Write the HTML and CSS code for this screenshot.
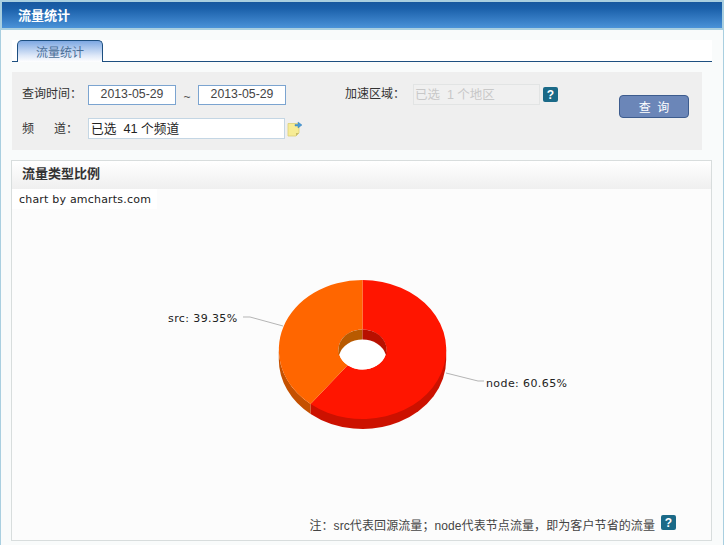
FILE: index.html
```html
<!DOCTYPE html>
<html lang="zh-CN">
<head>
<meta charset="utf-8">
<title>流量统计</title>
<link rel="stylesheet" href="styles.css">
</head>
<body>
<div class="frame">
  <header class="title-bar">流量统计</header>
  <div class="content">
    <div class="tabs"><div class="tab">流量统计</div></div>
    <form class="query">
      <div class="query-fields">
        <div class="row row-first">
          <span class="label">查询时间：</span>
          <span class="date">2013-05-29</span>
          <span class="tilde">~</span>
          <span class="date">2013-05-29</span>
          <span class="label label-region">加速区域：</span>
          <span class="region">已选&nbsp; 1 个地区</span>
          <svg class="help help-region" width="15" height="15" viewBox="0 0 15 15"><rect width="15" height="15" rx="2" fill="#1b6a88"/><text x="7.5" y="12" text-anchor="middle" class="help-mark">?</text></svg>
        </div>
        <div class="row row-second">
          <span class="label label-spaced"><span>频</span><span>道：</span></span>
          <span class="channel">已选&nbsp; 41 个频道</span>
          <svg class="note" width="16" height="16" viewBox="0 0 16 16">
            <path d="M1 2.5H12V12L9 15H1Z" fill="#f7ec95" stroke="#dccf78" stroke-width="0.8"/>
            <path d="M9 15V12H12Z" fill="#c9bd6a"/>
            <path d="M8 3.5H11V1L15 4L11 7V5H8Z" fill="#4a9bd8" stroke="#2f78b0" stroke-width="0.4"/>
          </svg>
        </div>
      </div>
      <button class="search" type="button">查 询</button>
    </form>
    <section class="panel">
      <h2 class="panel-head">流量类型比例</h2>
      <div class="chart">
        <div class="credit-row"><span class="credit">chart by amcharts.com</span></div>
        <svg class="pie" width="699" height="300" viewBox="12 209 699 300">
          <path d="M243 317H250L283 326" class="leader"/>
          <path d="M446 373L478 381H484" class="leader"/>
          <path d="M278.8 349.5V359.5A83.7 69.5 0 0 0 310.6 414V404A83.7 69.5 0 0 1 278.8 349.5Z" fill="#c45000"/>
          <path d="M310.6 404V414A83.7 69.5 0 0 0 446.2 359.5V349.5Z" fill="#cc1100"/>
          <path d="M362.5 280A83.7 69.5 0 1 1 310.6 404L347.6 365.2A24 20 0 1 0 362.5 329.5Z" fill="#ff1500"/>
          <path d="M362.5 280A83.7 69.5 0 0 0 310.6 404L347.6 365.2A24 20 0 0 1 362.5 329.5Z" fill="#ff6600"/>
          <path d="M338.5 349.5A24 20 0 0 1 362.5 329.5V355H338.5Z" fill="#b85a00"/>
          <path d="M386.5 349.5A24 20 0 0 0 362.5 329.5V355H386.5Z" fill="#b81000"/>
          <path d="M339.26 354.5A24 20 0 0 1 385.74 354.5A24 20 0 0 1 339.26 354.5Z" fill="#fff"/>
          <text x="168" y="322" class="pie-label">src: 39.35%</text>
          <text x="486" y="387" class="pie-label">node: 60.65%</text>
        </svg>
        <p class="note-line">
          <span>注：src代表回源流量；node代表节点流量，即为客户节省的流量</span>
          <svg class="help help-note" width="15" height="15" viewBox="0 0 15 15"><rect width="15" height="15" rx="2" fill="#1b6a88"/><text x="7.5" y="12" text-anchor="middle" class="help-mark">?</text></svg>
        </p>
      </div>
    </section>
  </div>
</div>
</body>
</html>
```
FILE: styles.css
```css
* { box-sizing: border-box; }
html, body { margin: 0; padding: 0; background: #fff; height: 100%; overflow: hidden; }
body { font: 12px "Liberation Sans", "Noto Sans CJK SC", sans-serif; color: #333; }
.frame {
  width: 724px; height: 545px; background: #f9fbfb;
  border-left: 1px solid #a9cfe0; border-right: 1px solid #a9cfe0;
}
.title-bar {
  height: 30px; margin-left: -1px; margin-right: -1px; padding: 0 0 1px 16px;
  display: flex; align-items: center; color: #fff; font-weight: 700; font-size: 13px;
  background: linear-gradient(#17589f 0, #1b60aa 25%, #4a92d8 100%);
  border: 2px solid #a9cfe0;
}
.content { padding: 10px 11px 0 10px; }
.tabs {
  width: 700px; height: 22px; margin-left: 1px; padding-left: 5px;
  background: #fff; border-bottom: 1px solid #1d4f80;
}
.tab {
  width: 86px; height: 22px; padding-top: 2px; text-align: center; color: #4a6f98;
  background: linear-gradient(#7ea8e2, #dfe9f8 70%, #fff);
  border: 1px solid #1d4f80; border-bottom: 0; border-radius: 5px 5px 0 0;
}
.query {
  display: flex; width: 690px; height: 78px; margin: 10px 0 0 1px; background: #efefef;
}
.query-fields { width: 607px; padding-top: 12px; }
.row { display: flex; align-items: center; }
.row-first { height: 21px; }
.row-second { height: 21px; margin-top: 13px; }
.label { width: 76px; padding-left: 10px; padding-bottom: 5px; flex: none; color: #333; white-space: nowrap; }
.label-spaced { display: flex; justify-content: space-between; padding-right: 10px; padding-bottom: 3px; }
.label-region { width: 68px; padding-left: 0; margin-left: 59px; }
.date {
  width: 88px; height: 20px; line-height: 16px; text-align: center; background: #fff;
  border: 1px solid #7ba4d0; color: #444; flex: none; font-size: 12.3px;
}
.tilde { width: 22px; text-align: center; padding-top: 5px; color: #555; flex: none; }
.region {
  width: 127px; height: 21px; line-height: 21px; padding-left: 1px; flex: none;
  border: 1px solid #e2e4e4; background: #f0f0f0; color: #c8c8c8; font-size: 12.5px;
}
.help { display: block; flex: none; }
.help-mark { font: 700 12px "Liberation Sans", sans-serif; fill: #fff; }
.help-region { margin-left: 3px; margin-top: -1px; }
.channel {
  width: 197px; height: 21px; line-height: 21px; padding-left: 2px; flex: none;
  border: 1px solid #c4d6e4; background: #fff; color: #222; font-size: 12.7px;
}
.note { margin-left: 2px; flex: none; }
.search {
  width: 70px; height: 23px; margin-top: 23px; padding: 0; color: #fff; flex: none;
  font: 12px "Liberation Sans", "Noto Sans CJK SC", sans-serif; word-spacing: 3px;
  background: #6b86b8; border: 1px solid #3d5c8e; border-radius: 4px;
}
.panel {
  width: 701px; height: 381px; margin-top: 10px; background: #fcfcfc;
  border: 1px solid #d8dddd;
}
.panel-head {
  height: 28px; margin: 0; padding: 0 0 0 10px; line-height: 26px;
  font-size: 13px; font-weight: 700; color: #333;
  background: linear-gradient(#fff, #efefef);
}
.chart { display: flex; flex-direction: column; }
.credit-row { height: 20px; }
.credit {
  display: inline-block; height: 20px; padding: 1px 6px 0 7px;
  background: #fff; color: #222; font: 11px/20px "DejaVu Sans", sans-serif; letter-spacing: 0.2px;
}
.pie { display: block; }
.leader { fill: none; stroke: #b5b5b5; stroke-width: 1; }
.pie-label { font: 11px "DejaVu Sans", sans-serif; fill: #222; letter-spacing: 0.4px; }
.note-line {
  display: flex; align-items: center; justify-content: flex-end; height: 20px;
  margin: 5px 35px 0 0; color: #444; letter-spacing: 0.09px;
}
.help-note { margin-left: 6px; margin-top: -4px; }
```
